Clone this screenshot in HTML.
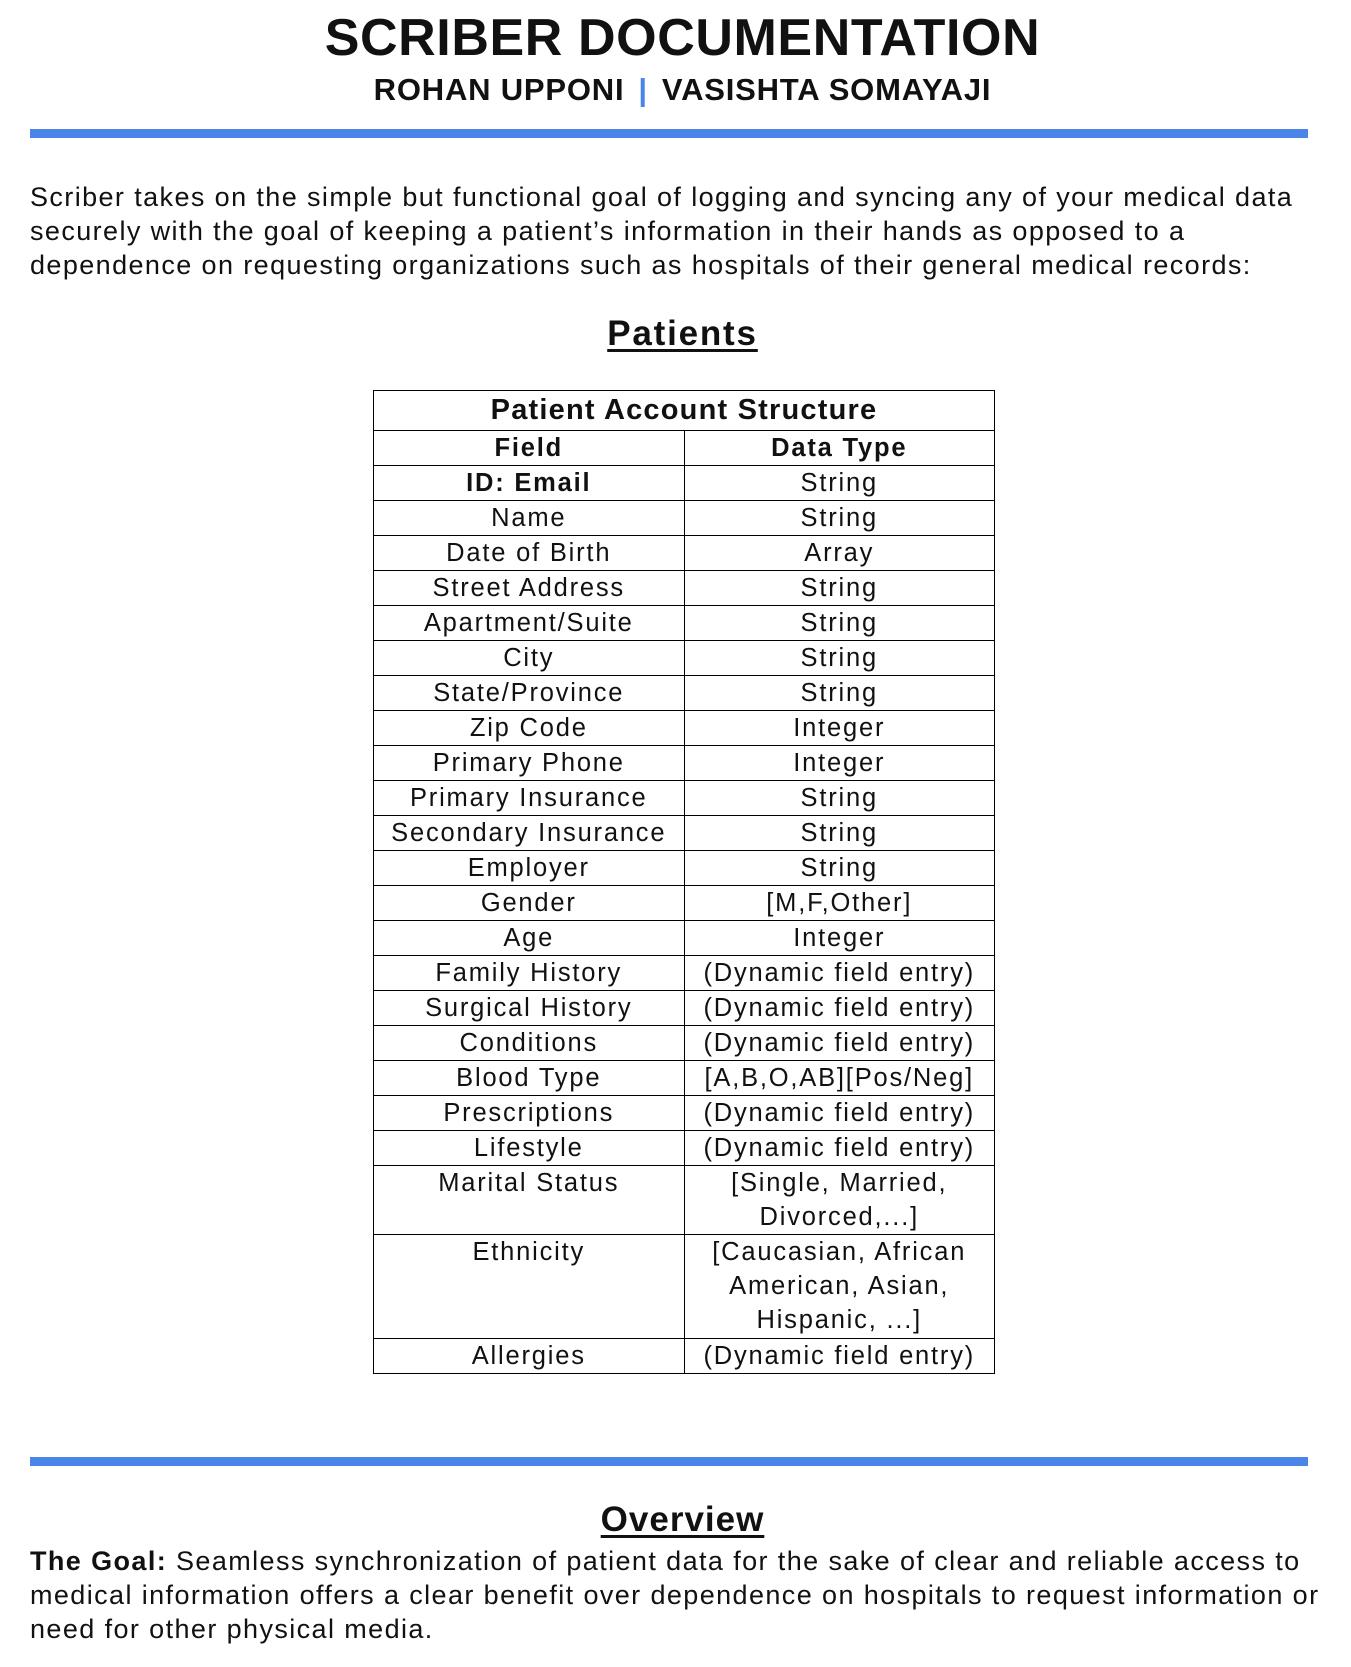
<!DOCTYPE html>
<html><head><meta charset="utf-8"><style>
*{margin:0;padding:0;box-sizing:border-box}
body{width:1351px;height:1667px;background:#fff;font-family:"Liberation Sans",sans-serif;color:#111;position:relative;overflow:hidden}
.a{position:absolute;left:7px;width:1351px;text-align:center}
h1{position:absolute;left:7px;width:1351px;text-align:center;top:8px;font-size:52px;font-weight:bold;letter-spacing:0.6px;line-height:60px}
.sub{top:70px;font-size:31px;font-weight:bold;letter-spacing:0.8px;line-height:40px}
.sub span{color:#4a86e8;margin:0 14px}
.bar{position:absolute;left:30px;width:1278px;height:9px;background:#4a86e8}
.p{position:absolute;left:30px;width:1340px;font-size:27px;line-height:34px;letter-spacing:1.4px;white-space:nowrap}
.h{font-size:35px;font-weight:bold;text-decoration:underline;text-underline-offset:4px;letter-spacing:1.8px}
table{position:absolute;left:373px;top:390px;width:622px;border-collapse:collapse;font-size:25.5px;letter-spacing:1.8px}
td{border:1.5px solid #000;text-align:center;vertical-align:top;line-height:34px;height:35px;width:50%;padding:0 2px;white-space:nowrap}
td.t{font-weight:bold;font-size:29px;height:39px;line-height:39px;letter-spacing:1.2px}
.b{font-weight:bold}
</style></head><body>
<h1>SCRIBER DOCUMENTATION</h1>
<div class="a sub">ROHAN UPPONI<span>|</span>VASISHTA SOMAYAJI</div>
<div class="bar" style="top:129px"></div>
<div class="p" style="top:180px">Scriber takes on the simple but functional goal of logging and syncing any of your medical data<br>securely with the goal of keeping a patient’s information in their hands as opposed to a<br>dependence on requesting organizations such as hospitals of their general medical records:</div>
<div class="a h" style="top:314px">Patients</div>
<table>
<tr><td colspan="2" class="t">Patient Account Structure</td></tr>
<tr><td class="b">Field</td><td class="b">Data Type</td></tr>
<tr><td class="b">ID: Email</td><td>String</td></tr>
<tr><td>Name</td><td>String</td></tr>
<tr><td>Date of Birth</td><td>Array</td></tr>
<tr><td>Street Address</td><td>String</td></tr>
<tr><td>Apartment/Suite</td><td>String</td></tr>
<tr><td>City</td><td>String</td></tr>
<tr><td>State/Province</td><td>String</td></tr>
<tr><td>Zip Code</td><td>Integer</td></tr>
<tr><td>Primary Phone</td><td>Integer</td></tr>
<tr><td>Primary Insurance</td><td>String</td></tr>
<tr><td>Secondary Insurance</td><td>String</td></tr>
<tr><td>Employer</td><td>String</td></tr>
<tr><td>Gender</td><td>[M,F,Other]</td></tr>
<tr><td>Age</td><td>Integer</td></tr>
<tr><td>Family History</td><td>(Dynamic field entry)</td></tr>
<tr><td>Surgical History</td><td>(Dynamic field entry)</td></tr>
<tr><td>Conditions</td><td>(Dynamic field entry)</td></tr>
<tr><td>Blood Type</td><td>[A,B,O,AB][Pos/Neg]</td></tr>
<tr><td>Prescriptions</td><td>(Dynamic field entry)</td></tr>
<tr><td>Lifestyle</td><td>(Dynamic field entry)</td></tr>
<tr><td style="height:69px">Marital Status</td><td>[Single, Married,<br>Divorced,...]</td></tr>
<tr><td style="height:104px">Ethnicity</td><td>[Caucasian, African<br>American, Asian,<br>Hispanic, ...]</td></tr>
<tr><td>Allergies</td><td>(Dynamic field entry)</td></tr>
</table>
<div class="bar" style="top:1457px"></div>
<div class="a h" style="top:1500px;letter-spacing:1px">Overview</div>
<div class="p" style="top:1544px"><b>The Goal:</b> Seamless synchronization of patient data for the sake of clear and reliable access to<br>medical information offers a clear benefit over dependence on hospitals to request information or<br>need for other physical media.</div>
</body></html>
